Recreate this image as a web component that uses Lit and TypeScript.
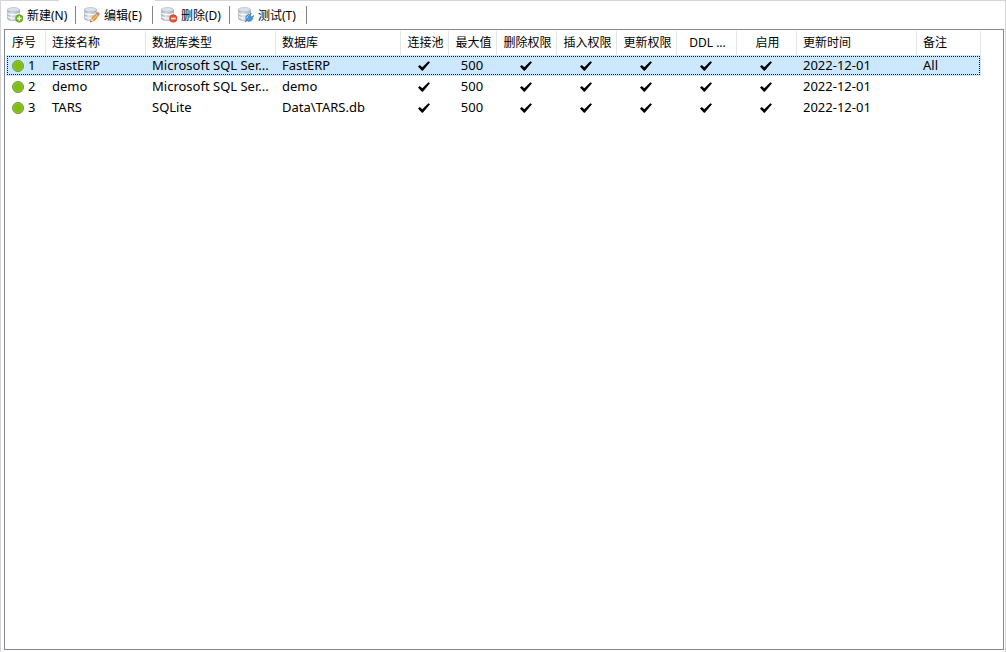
import { LitElement, html, css, svg, nothing } from "lit";
import { customElement, property, state } from "lit/decorators.js";

type Badge = "add" | "edit" | "remove" | "test";

interface Connection {
  name: string;
  type: string;
  database: string;
  max: number;
  updated: string;
  note: string;
}

const ACTIONS: { label: string; badge: Badge }[] = [
  { label: "新建(N)", badge: "add" },
  { label: "编辑(E)", badge: "edit" },
  { label: "删除(D)", badge: "remove" },
  { label: "测试(T)", badge: "test" },
];

const COLUMNS: { title: string; size: string; center?: boolean }[] = [
  { title: "序号", size: "index" },
  { title: "连接名称", size: "name" },
  { title: "数据库类型", size: "type" },
  { title: "数据库", size: "database" },
  { title: "连接池", size: "narrow", center: true },
  { title: "最大值", size: "narrow", center: true },
  { title: "删除权限", size: "flag", center: true },
  { title: "插入权限", size: "flag", center: true },
  { title: "更新权限", size: "flag", center: true },
  { title: "DDL ...", size: "flag", center: true },
  { title: "启用", size: "flag", center: true },
  { title: "更新时间", size: "updated" },
  { title: "备注", size: "note" },
];

const CONNECTIONS: Connection[] = [
  { name: "FastERP", type: "Microsoft SQL Ser...", database: "FastERP", max: 500, updated: "2022-12-01", note: "All" },
  { name: "demo", type: "Microsoft SQL Ser...", database: "demo", max: 500, updated: "2022-12-01", note: "" },
  { name: "TARS", type: "SQLite", database: "Data\\TARS.db", max: 500, updated: "2022-12-01", note: "" },
];

@customElement("db-icon")
export class DbIcon extends LitElement {
  @property() badge: Badge = "add";

  static styles = css`
    :host { display: block; width: 16px; height: 16px; }
    svg { display: block; }
  `;

  private renderBadge() {
    switch (this.badge) {
      case "add":
        return svg`<circle cx="12.3" cy="11.500" r="3.700" fill="#72b81c" stroke="#5a9f12" stroke-width=".7"/>
          <path d="M12.3 9.300v4.400M10.100 11.500h4.400" stroke="#fff" stroke-width="1.500"/>`;
      case "remove":
        return svg`<circle cx="12.3" cy="11.500" r="3.700" fill="#ea5233" stroke="#d03e22" stroke-width=".7"/>
          <path d="M10 11.500h4.600" stroke="#fff" stroke-width="1.600"/>`;
      case "edit":
        return svg`<path d="M6.400 15l1-3.300 4.800-5.200 2.300 2.200L9.700 14z" fill="#f5a033" stroke="#cf7d22" stroke-width=".5"/>
          <path d="M8.500 12.900l4.900-5.300" stroke="#fcd08a" stroke-width=".8"/>
          <path d="M12.200 6.500l1.200-1.200q.6-.5 1.200 0l1.100 1.100q.4.600-.1 1.100l-1.100 1.200z" fill="#b7829b"/>
          <path d="M6.400 15l1-3.300L9.700 14z" fill="#ecd9bd"/>
          <path d="M6.200 15.200l.5-1.500 1.100 1z" fill="#3c3c3c"/>`;
      case "test":
        return svg`<path d="M7.200 14.800l1.600-1.600M11.800 7.700l1.600-1.700M14.200 10.100l1.700-1.600" stroke="#3f7cb8" stroke-width="1.200" fill="none"/>
          <path d="M10.700 7l4.300 4.300q-1.200 3.100-4.100 3.100-3-.3-3.200-3.200.1-3 3-4.200z" fill="#4c95da" stroke="#2f6cab" stroke-width=".6"/>
          <path d="M10.600 8.500q-1.800 1-1.700 2.900" stroke="#b4daf9" stroke-width="1" fill="none"/>`;
    }
  }

  render() {
    return html`<svg width="16" height="16" viewBox="0 0 16 16" aria-hidden="true">
      <defs>
        <linearGradient id="side">
          <stop offset="0" stop-color="#a9b0b6"/>
          <stop offset=".35" stop-color="#dfe4e8"/>
          <stop offset="1" stop-color="#a6adb4"/>
        </linearGradient>
      </defs>
      <path d="M.5 2.500v8.900c0 1.300 2.700 2.300 6 2.300s6-1 6-2.300V2.500z" fill="url(#side)" stroke="#a3a9af" stroke-width=".6"/>
      <path d="M.8 5.900c.5 1 2.800 1.700 5.700 1.700s5.200-.7 5.700-1.700M.8 9.600c.5 1 2.800 1.700 5.700 1.700s5.200-.7 5.700-1.700" fill="none" stroke="#f8fafb" stroke-width="1.100"/>
      <ellipse cx="6.500" cy="2.700" rx="6" ry="2.200" fill="#d9e3ec" stroke="#a9b1b8" stroke-width=".6"/>
      ${this.renderBadge()}
    </svg>`;
  }
}

@customElement("connection-table")
export class ConnectionTable extends LitElement {
  @state() private selected = 0;

  static styles = css`
    :host { display: block; }
    table { table-layout: fixed; width: 975px; border-collapse: separate; border-spacing: 0; }
    th, td {
      box-sizing: border-box;
      padding: 0 4px 0 6px;
      font-weight: 400;
      text-align: left;
      white-space: nowrap;
      overflow: hidden;
    }
    th { height: 24px; line-height: 22px; font-size: 12px; border-right: 1px solid #e5e5e5; }
    td { height: 21px; line-height: 19px; border: solid transparent; border-width: 1px 0; }
    .index { width: 40px; }
    .name { width: 100px; }
    .type { width: 130px; }
    .database { width: 125px; }
    .narrow { width: 48px; }
    .flag { width: 60px; }
    .updated { width: 120px; }
    .center { text-align: center; }
    td.center { padding: 0 7px 0 5px; }
    .selected td { background: #cce8ff; }
    .selected { outline: 1px dotted #20100c; outline-offset: -2px; }
    .order { display: flex; align-items: center; gap: 4px; }
    .dot {
      box-sizing: border-box;
      width: 12px;
      height: 12px;
      border: 1px solid #6f9a3c;
      border-radius: 50%;
      background: #7fbf0e;
      box-shadow: inset 0 0 0 1px #97c94a;
    }
    .tick { display: block; margin: 0 auto; }
  `;

  private tick() {
    return html`<td class="center">
      <svg class="tick" width="14" height="12" viewBox="0 0 14 12" role="img" aria-label="是">
        <path d="M1 6.600L2.800 5l2.500 2.300L11.400 1.200 13 2.200 5.800 10.800h-.9z" fill="#000"/>
      </svg>
    </td>`;
  }

  render() {
    return html`<table>
      <thead>
        <tr>
          ${COLUMNS.map((c) => html`<th scope="col" class="${c.size} ${c.center ? "center" : ""}">${c.title}</th>`)}
        </tr>
      </thead>
      <tbody>
        ${CONNECTIONS.map(
          (row, i) => html`<tr class=${i === this.selected ? "selected" : nothing} @click=${() => (this.selected = i)}>
            <td><span class="order"><span class="dot"></span>${i + 1}</span></td>
            <td>${row.name}</td>
            <td>${row.type}</td>
            <td>${row.database}</td>
            ${this.tick()}
            <td class="center">${row.max}</td>
            ${[0, 1, 2, 3, 4].map(() => this.tick())}
            <td>${row.updated}</td>
            <td>${row.note}</td>
          </tr>`
        )}
      </tbody>
    </table>`;
  }
}

@customElement("app-root")
export class AppRoot extends LitElement {
  static styles = css`
    :host {
      box-sizing: border-box;
      position: relative;
      display: flex;
      flex-direction: column;
      height: 100vh;
      padding: 0 1px 2px 3px;
      border: solid #d4d4d8;
      border-width: 1px 1px 0 1px;
      background: #fff;
      color: #000;
      font: 13px "Noto Sans", "Noto Sans CJK SC", sans-serif;
    }
    /* Opening in the top edge where the active tab joins the page. */
    :host::before {
      content: "";
      position: absolute;
      top: -1px;
      left: 58px;
      width: 96px;
      height: 1px;
      background: #fff;
    }
    .toolbar { display: flex; align-items: center; height: 28px; }
    .action {
      display: flex;
      align-items: center;
      gap: 4px;
      min-width: 71px;
      height: 24px;
      padding: 0 3px;
      border: 0;
      background: none;
      color: inherit;
      font: inherit;
      font-size: 12px;
      white-space: nowrap;
    }
    .divider { width: 1px; height: 18px; margin-right: 5px; background: #838383; }
    .frame { flex: 1; min-height: 0; overflow: auto; padding: 1px; border: 1px solid #828790; }
  `;

  render() {
    return html`
      <div class="toolbar" role="toolbar">
        ${ACTIONS.map(
          (a) => html`<button class="action" type="button"><db-icon badge=${a.badge}></db-icon>${a.label}</button>
            <span class="divider"></span>`
        )}
      </div>
      <main class="frame"><connection-table></connection-table></main>
    `;
  }
}
